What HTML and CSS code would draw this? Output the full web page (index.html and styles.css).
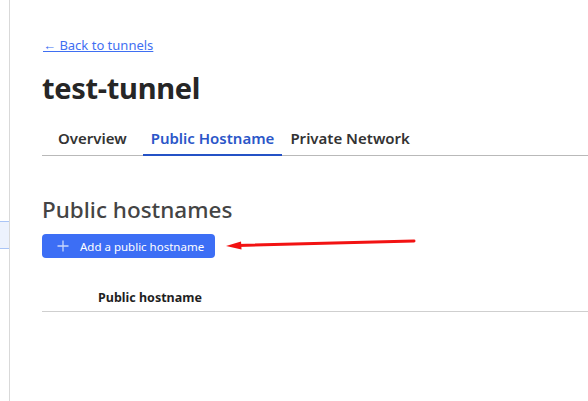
FILE: index.html
```html
<!DOCTYPE html>
<html>
<head>
<meta charset="utf-8">
<link rel="stylesheet" href="styles.css">
</head>
<body>
<div class="app">
  <aside class="sidebar">
    <div class="side-item selected"></div>
  </aside>
  <main class="main">
    <a class="back" href="#">← Back to tunnels</a>
    <h1 class="title">test-tunnel</h1>
    <nav class="tabs">
      <span class="tab first">Overview</span>
      <span class="tab active">Public Hostname</span>
      <span class="tab">Private Network</span>
    </nav>
    <h2 class="section-title">Public hostnames</h2>
    <div class="actions">
      <button class="btn-primary">
        <svg class="plus" width="12" height="12" viewBox="0 0 12 12"><path d="M6 0.5V11.5M0.5 6H11.5" stroke="#c9d7fb" stroke-width="1.3" fill="none"/></svg>
        <span>Add a public hostname</span>
      </button>
    </div>
    <div class="table">
      <div class="thead">
        <span class="th">Public hostname</span>
      </div>
    </div>
  </main>
  <svg class="annot" width="200" height="14" viewBox="0 0 200 14">
    <path d="M12 8.5L188 4" stroke="#f21212" stroke-width="3" stroke-linecap="round" fill="none"/>
    <path d="M0 9L15 4.5L15.5 12.5Z" fill="#f21212"/>
  </svg>
</div>
</body>
</html>
```

FILE: styles.css
```css
* { box-sizing: border-box; }
html, body { margin: 0; padding: 0; background: #fff; }
body {
  font-family: "Noto Sans", "Open Sans", sans-serif;
  color: #2c2c2c;
  width: 588px;
  height: 401px;
  overflow: hidden;
}
.app {
  position: relative;
  display: flex;
  height: 401px;
}
.sidebar {
  width: 10px;
  flex: none;
  border-right: 1px solid #d9d9d9;
  padding-top: 221px;
}
.side-item.selected {
  height: 28px;
  background: #edf2fd;
  border-top: 1px solid #aac4f6;
  border-bottom: 1px solid #aac4f6;
}
.main {
  flex: 1;
  padding: 37px 0 0 32px;
  display: flex;
  flex-direction: column;
  align-items: flex-start;
}
.back {
  font-size: 13px;
  line-height: 16px;
  color: #3f6ff2;
  text-decoration: underline;
  margin-left: 1px;
}
.title {
  margin: 15px 0 0 0;
  font-size: 29px;
  line-height: 40px;
  font-weight: 700;
  color: #262626;
  letter-spacing: -0.3px;
}
.tabs {
  margin-top: 14px;
  align-self: stretch;
  display: flex;
  border-bottom: 1px solid #b9b9b9;
  height: 34px;
}
.tab {
  font-size: 15px;
  font-weight: 600;
  color: #333;
  padding: 6px 8px 0;
  line-height: 20px;
}
.tab.first { padding: 6px 16px 0; }
.tab.active {
  color: #2b56c8;
  border-bottom: 2px solid #2452c6;
  margin-bottom: -1px;
}
.section-title {
  margin: 39px 0 0 0;
  font-size: 22.5px;
  line-height: 30px;
  font-weight: 500;
  color: #444;
}
.actions { margin-top: 9px; }
.btn-primary {
  display: flex;
  align-items: center;
  gap: 11px;
  height: 24px;
  width: 173px;
  padding: 0 0 0 15px;
  border: none;
  border-radius: 4px;
  background: #3c6ef5;
  color: #fff;
  font-family: "Noto Sans", "Open Sans", sans-serif;
  font-size: 11.5px;
  white-space: nowrap;
}
.plus { flex: none; }
.table {
  align-self: stretch;
  margin-top: 27px;
}
.thead {
  border-bottom: 1px solid #cfcfcf;
  height: 27px;
  padding-left: 56px;
}
.th {
  font-size: 12.5px;
  font-weight: 700;
  line-height: 18px;
  color: #1f1f1f;
}
.annot {
  position: absolute;
  left: 226px;
  top: 237px;
}
```
